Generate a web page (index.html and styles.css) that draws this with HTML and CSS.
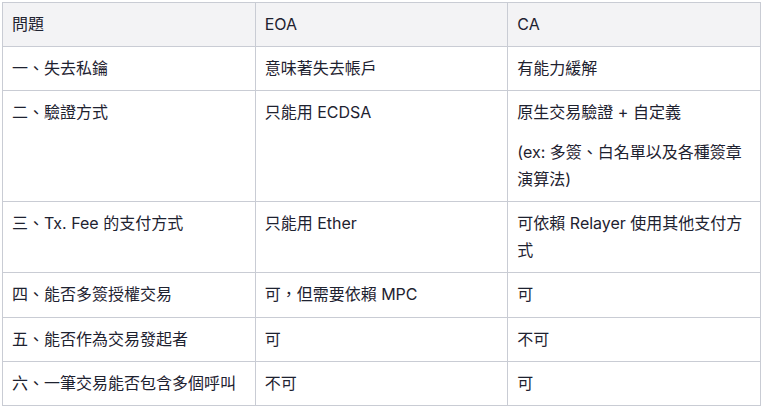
FILE: index.html
```html
<!DOCTYPE html>
<html lang="zh-Hant">
<head>
<meta charset="utf-8">
<title>EOA vs CA</title>
<link rel="stylesheet" href="styles.css">
</head>
<body>
<table class="cmp">
  <thead>
    <tr><th>問題</th><th>EOA</th><th>CA</th></tr>
  </thead>
  <tbody>
    <tr><td>一、失去私鑰</td><td>意味著失去帳戶</td><td>有能力緩解</td></tr>
    <tr><td>二、驗證方式</td><td>只能用 ECDSA</td><td><p class="para">原生交易驗證 + 自定義</p><p class="para">(ex: 多簽、白名單以及各種簽章演算法)</p></td></tr>
    <tr><td>三、Tx. Fee 的支付方式</td><td>只能用 Ether</td><td>可依賴 Relayer 使用其他支付方式</td></tr>
    <tr><td>四、能否多簽授權交易</td><td>可，但需要依賴 MPC</td><td>可</td></tr>
    <tr><td>五、能否作為交易發起者</td><td>可</td><td>不可</td></tr>
    <tr><td>六、一筆交易能否包含多個呼叫</td><td>不可</td><td>可</td></tr>
  </tbody>
</table>
</body>
</html>
```
FILE: styles.css
```css
html, body {
  margin: 0;
  padding: 0;
  background: #ffffff;
}
body {
  padding: 2px 0 0 2px;
  font-family: Inter, "Noto Sans CJK TC", sans-serif;
  font-size: 16px;
  color: #1e2230;
}
.cmp {
  border-collapse: collapse;
  table-layout: fixed;
  width: 759px;
}
.cmp th,
.cmp td {
  border: 1px solid #c9ccd4;
  padding: 8px 16px 8px 9px;
  line-height: 1.7;
  text-align: left;
  vertical-align: top;
  font-weight: 400;
}
.cmp th {
  background: #f3f3f5;
}
.para {
  margin: 0;
}
.para + .para {
  margin-top: 12px;
}
```
